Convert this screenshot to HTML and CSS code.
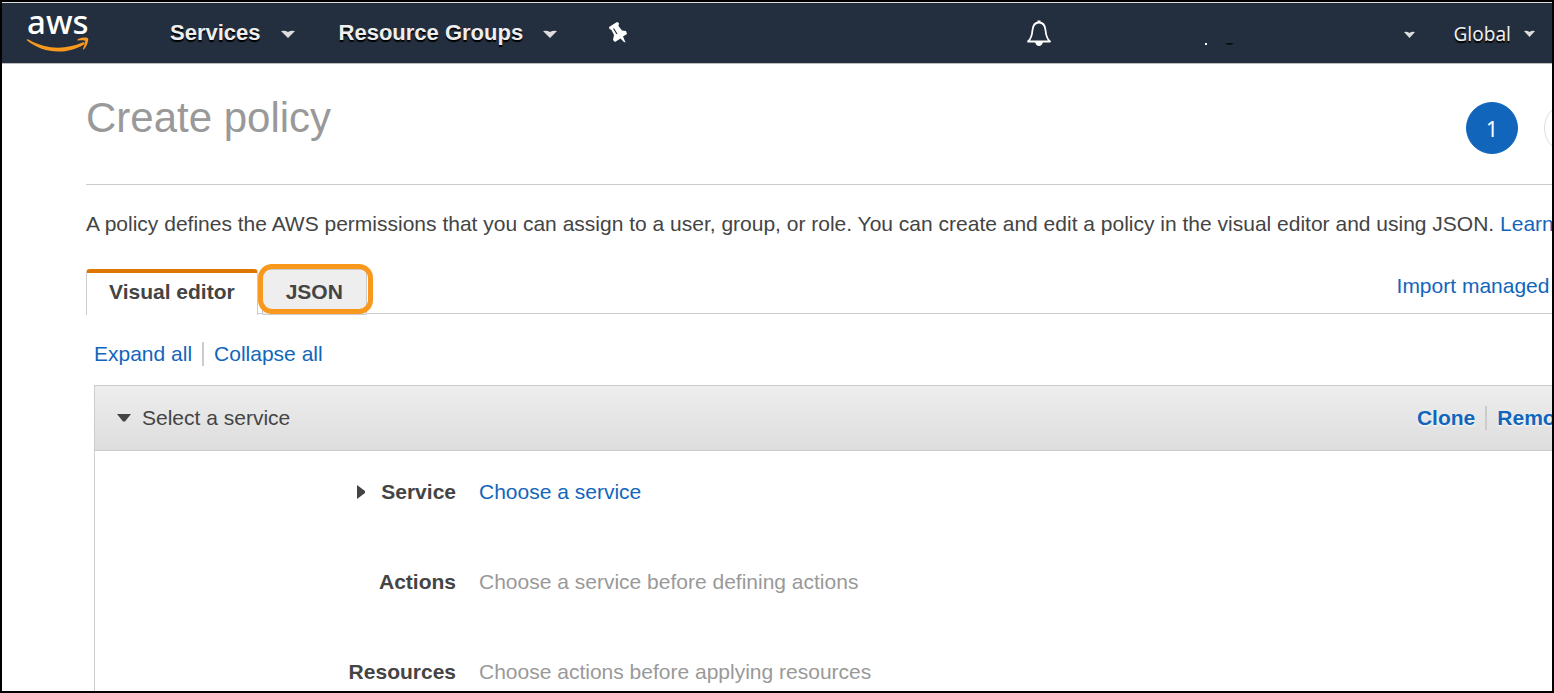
FILE: index.html
```html
<!DOCTYPE html>
<html lang="en">
<head>
<meta charset="utf-8">
<title>Create policy</title>
<link rel="stylesheet" href="styles.css">
</head>
<body>
<div class="frame">
  <header class="navbar">
    <a class="logo" href="#" aria-label="AWS home">
      <svg width="64" height="48" viewBox="0 0 64 48">
        <text class="logo-text" x="1" y="28">aws</text>
        <g transform="translate(0 3)" fill="#f8981d">
          <path d="M0.500 31C1 30 2 30 3 30.700C20 40.500 39 41 56.500 33.500C58.500 32.800 59.500 34.200 58 35.400C41 46 17 45 0.500 31Z"/>
          <path d="M51.500 30.500C54.500 28.500 61 28 62 29.300C63 31 61 37.500 58 40.200C57.300 40.800 56.700 40.400 57 39.700C58 37.300 59.700 32.800 59 31.900C58 30.900 54.500 31.300 52 31.600C51.200 31.700 51 31 51.500 30.500Z"/>
        </g>
      </svg>
    </a>
    <nav class="menus">
      <button class="menu" type="button">Services
        <svg class="caret" width="14" height="9" viewBox="0 0 14 9"><path d="M0 1Q4 0 7 2Q10 0 14 1L7 8Z"/></svg>
      </button>
      <button class="menu" type="button">Resource Groups
        <svg class="caret" width="14" height="9" viewBox="0 0 14 9"><path d="M0 1Q4 0 7 2Q10 0 14 1L7 8Z"/></svg>
      </button>
      <button class="icon-button" type="button" aria-label="Pin shortcuts">
        <svg width="20" height="22" viewBox="0 0 20 22"><path fill="#fff" d="M1 5L9 0L11 1L10.500 4L14 8.500L18 9L19 12L15 14.500L17.500 20.500L16 20L12.500 16.500L7 20L5 18L6 13L3.500 8L1.500 7Z"/><path d="M5.500 6.500L9 12" stroke="#232f3e" stroke-width="1.200"/></svg>
      </button>
    </nav>
    <div class="tools">
      <button class="icon-button" type="button" aria-label="Notifications">
        <svg width="24" height="26" viewBox="0 0 24 26"><path d="M1 21.500C4 19 5 16 5.500 10C6 5 8.500 2.500 12 2.500S18 5 18.500 10C19 16 20 19 23 21.500Z" fill="none" stroke="#fff" stroke-width="1.800" stroke-linejoin="round"/><path d="M8 22H16Q15 26 12 26T8 22ZM10.500 0.500H13.500V3H10.500Z" fill="#fff"/></svg>
      </button>
      <button class="account" type="button" aria-label="Account">
        <svg width="32" height="4" viewBox="0 0 32 4"><path d="M0 1H2V3H0Z" fill="#fff"/><path d="M20 1H29L26 3H23Z" fill="#0b0e12"/></svg>
        <svg class="caret" width="11" height="8" viewBox="0 0 11 8"><path d="M0 1Q3 0 5.500 2Q8 0 11 1L5.500 7Z"/></svg>
      </button>
      <button class="region" type="button">Global
        <svg class="caret" width="11" height="8" viewBox="0 0 11 8"><path d="M0 1Q3 0 5.500 2Q8 0 11 1L5.500 7Z"/></svg>
      </button>
    </div>
  </header>

  <main class="content">
    <div class="heading">
      <h1 class="title">Create policy</h1>
      <ol class="steps">
        <li class="step step-current">1</li>
        <li class="step">2</li>
      </ol>
    </div>
    <p class="intro">A policy defines the AWS permissions that you can assign to a user, group, or role. You can create and edit a policy in the visual editor and using JSON. <a class="link" href="#">Learn more</a></p>

    <div class="tabbar">
      <div class="tabs" role="tablist">
        <button class="tab tab-active" type="button" role="tab" aria-selected="true">Visual editor</button>
        <button class="tab tab-json" type="button" role="tab" aria-selected="false">JSON</button>
      </div>
      <a class="link" href="#">Import managed policy</a>
    </div>

    <div class="editor">
      <div class="toggles">
        <a class="link" href="#">Expand all</a>
        <a class="link divided" href="#">Collapse all</a>
      </div>
      <section class="panel">
        <div class="panel-head">
          <button class="panel-title" type="button">
            <svg width="14" height="8" viewBox="0 0 14 8"><path d="M0 0H14L8 7.500H6Z" fill="#444"/></svg>
            Select a service
          </button>
          <div class="panel-actions">
            <a class="link" href="#">Clone</a>
            <a class="link divided" href="#">Remove</a>
          </div>
        </div>
        <dl class="rows">
          <dt class="label"><svg width="8" height="14" viewBox="0 0 8 14"><path d="M0 0L8 6V8L0 14Z" fill="#444"/></svg>Service</dt>
          <dd class="value"><a class="link" href="#">Choose a service</a></dd>
          <dt class="label">Actions</dt>
          <dd class="value">Choose a service before defining actions</dd>
          <dt class="label">Resources</dt>
          <dd class="value">Choose actions before applying resources</dd>
        </dl>
      </section>
    </div>
  </main>
</div>
</body>
</html>
```
FILE: styles.css
```css
* { box-sizing: border-box; }

body {
  margin: 0;
  background: #fff;
  color: #444;
  font: 21px/24px "Liberation Sans", Arial, sans-serif;
}

button {
  margin: 0;
  padding: 0;
  border: 0;
  background: none;
  color: inherit;
  font: inherit;
  cursor: pointer;
}

svg { display: block; flex: none; }

.frame {
  height: 100vh;
  overflow: hidden;
  border: 2px solid #000;
}

.link { color: #1166bb; text-decoration: none; }

/* Navigation bar */
.navbar {
  display: flex;
  align-items: center;
  height: 62px;
  padding: 0 17px 0 24px;
  border-top: 1px solid #ddd;
  border-bottom: 1px solid #bbb;
  background: #232f3e;
  color: #eee;
}

.logo { margin: 0 80px 6px 0; }

.logo-text {
  fill: #fff;
  font: 500 33px "Noto Sans", "Open Sans", sans-serif;
}

.menus { display: flex; align-items: center; gap: 44px; }

.menus .icon-button { margin-left: 7px; }

.menu {
  display: flex;
  align-items: center;
  gap: 20px;
  font-size: 22px;
  font-weight: bold;
  text-shadow: 0 2px 1px #000;
}

.caret { fill: #ddd; margin-top: 3px; }

.tools { display: flex; align-items: center; margin-left: auto; }

.account {
  display: flex;
  align-items: center;
  justify-content: space-between;
  width: 210px;
  height: 26px;
  margin: 0 39px 0 154px;
}

.account svg:first-child { margin-top: 22px; }

.region {
  display: flex;
  align-items: center;
  gap: 13px;
  padding-top: 2px;
  font-family: "Noto Sans", "Open Sans", sans-serif;
  font-size: 19px;
  text-shadow: 0 2px 1px #000;
}

.region .caret { margin-top: 0; }

/* Page body extends past the right edge of the frame */
.content {
  margin-right: -57px;
  padding-left: 84px;
}

.heading {
  display: flex;
  justify-content: space-between;
  height: 121px;
  padding: 30px 13px 0 0;
  border-bottom: 1px solid #ccc;
}

.title {
  margin: 0;
  color: #999;
  font-size: 42px;
  font-weight: normal;
  line-height: 48px;
}

.steps {
  display: flex;
  gap: 26px;
  margin: 8px 0 0;
  padding: 0;
  list-style: none;
}

.step {
  width: 52px;
  height: 52px;
  border: 1px solid #ddd;
  border-radius: 50%;
  color: #999;
  font: 21px/52px "Noto Sans", "Open Sans", sans-serif;
  text-align: center;
}

.step-current {
  border-color: #1166bb;
  background: #1166bb;
  color: #fff;
}

.intro { margin: 27px 0 33px; white-space: nowrap; }

/* Tabs */
.tabbar {
  display: flex;
  justify-content: space-between;
  height: 45px;
  border-bottom: 1px solid #ccc;
  white-space: nowrap;
}

.tabbar > .link { padding-top: 5px; }

.tabs { display: flex; gap: 4px; height: 46px; }

.tab {
  padding: 0 22px;
  border: 1px solid #ccc;
  border-bottom: 0;
  border-radius: 4px 4px 0 0;
  font-weight: bold;
}

.tab-active {
  border-top: 4px solid #dd7700;
  background: #fff;
  padding-bottom: 4px;
}

.tab-json {
  position: relative;
  padding: 0 23px;
  border-bottom: 1px solid #ccc;
  background: #eee;
}

.tab-json::after {
  content: "";
  position: absolute;
  inset: -6px -7px 0 -5px;
  border: 5px solid #f8981d;
  border-radius: 14px;
}

/* Policy editor */
.editor { padding: 28px 0 0 8px; }

.toggles { display: flex; gap: 10px; }

.divided { padding-left: 10px; border-left: 2px solid #ccc; }

.panel { margin-top: 19px; border: 1px solid #ccc; }

.panel-head {
  display: flex;
  align-items: center;
  justify-content: space-between;
  height: 65px;
  padding: 0 29px 0 22px;
  border-bottom: 1px solid #ccc;
  background: linear-gradient(#eee, #ddd);
}

.panel-title { display: flex; align-items: center; gap: 11px; }

.panel-actions {
  display: flex;
  gap: 10px;
  font-weight: bold;
  text-shadow: 0 1px 2px #fff;
}

.rows {
  display: grid;
  grid-template-columns: 361px 1fr;
  gap: 66px 23px;
  margin: 0;
  padding: 29px 0;
}

.label {
  display: flex;
  align-items: center;
  justify-content: flex-end;
  gap: 16px;
  font-weight: bold;
}

.value { margin: 0; color: #999; }
```
